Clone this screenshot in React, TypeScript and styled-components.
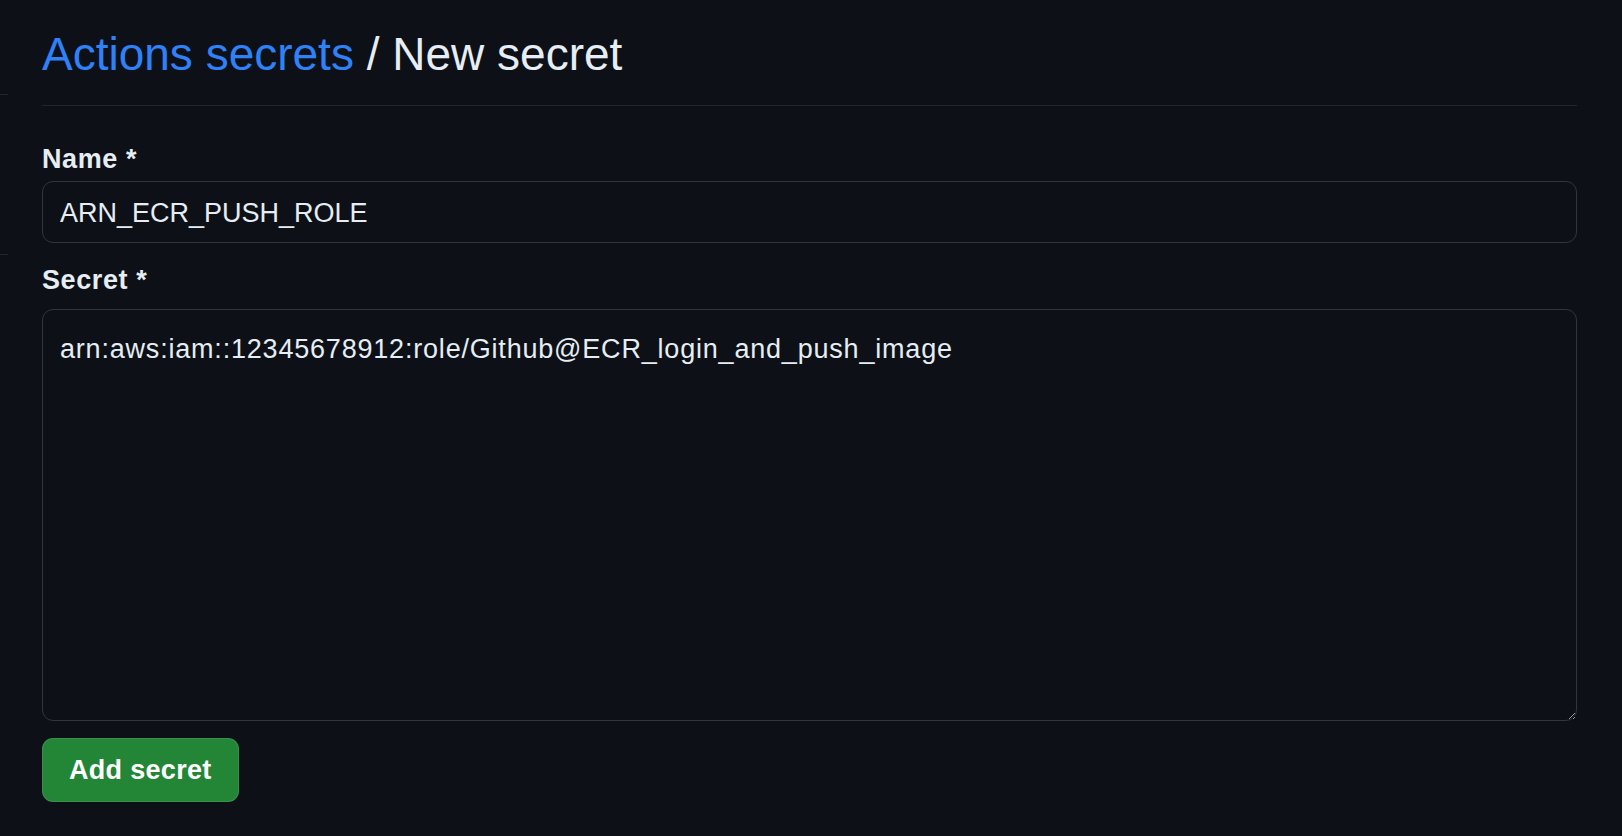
import React from "react";
import styled, { createGlobalStyle } from "styled-components";

const GlobalStyle = createGlobalStyle`
  html, body {
    margin: 0;
    padding: 0;
    background: #0d1117;
  }
  body {
    font-family: "Liberation Sans", Arial, sans-serif;
    color: #e6edf3;
  }
`;

export default function App() {
  return (
    <>
      <GlobalStyle />
      <Page>
        <Sidebar>
          <SideBlock />
        </Sidebar>
        <Main>
          <Header>
            <Crumb href="#">Actions secrets</Crumb> / New secret
          </Header>
          <Form onSubmit={(e) => e.preventDefault()}>
            <Label htmlFor="secret_name" $gap={4}>
              Name *
            </Label>
            <Input id="secret_name" type="text" defaultValue="ARN_ECR_PUSH_ROLE" />
            <Label htmlFor="secret_value" $gap={11} $top={19}>
              Secret *
            </Label>
            <TextArea
              id="secret_value"
              defaultValue="arn:aws:iam::12345678912:role/Github@ECR_login_and_push_image"
            />
            <Button type="submit">Add secret</Button>
          </Form>
        </Main>
      </Page>
    </>
  );
}

const Page = styled.div`
  display: flex;
  min-height: 836px;
  background: #0d1117;
`;

const Sidebar = styled.aside`
  width: 8px;
  flex-shrink: 0;
  padding-top: 94px;
`;

const SideBlock = styled.div`
  height: 159px;
  border-top: 1px solid #21262d;
  border-bottom: 1px solid #21262d;
`;

const Main = styled.main`
  flex: 1;
  margin-left: 34px;
  margin-right: 45px;
`;

const Header = styled.h2`
  margin: 0;
  padding: 25px 0 22px;
  font-size: 46px;
  font-weight: 400;
  line-height: 58px;
  color: #e6edf3;
  border-bottom: 1px solid #21262d;
  white-space: nowrap;
`;

const Crumb = styled.a`
  color: #2f81f7;
  text-decoration: none;
  &:hover {
    text-decoration: underline;
  }
`;

const Form = styled.form`
  display: flex;
  flex-direction: column;
  align-items: flex-start;
  padding-top: 35px;
`;

const Label = styled.label<{ $gap: number; $top?: number }>`
  display: block;
  font-size: 27px;
  font-weight: 700;
  line-height: 36px;
  letter-spacing: 0.6px;
  color: #e6edf3;
  margin-top: ${(p) => p.$top ?? 0}px;
  margin-bottom: ${(p) => p.$gap}px;
`;

const fieldBase = `
  box-sizing: border-box;
  width: 100%;
  font-family: "Liberation Sans", Arial, sans-serif;
  font-size: 27px;
  color: #e6edf3;
  background: #0d1117;
  border: 1px solid #30363d;
  border-radius: 11px;
  outline: none;
  color-scheme: dark;
  &:focus {
    border-color: #2f81f7;
    box-shadow: inset 0 0 0 1px #2f81f7;
  }
`;

const Input = styled.input`
  ${fieldBase}
  height: 62px;
  padding: 3px 17px 0;
`;

const TextArea = styled.textarea`
  ${fieldBase}
  height: 412px;
  padding: 19px 17px 17px;
  line-height: 1.5;
  letter-spacing: 0.8px;
  resize: vertical;
`;

const Button = styled.button`
  margin-top: 17px;
  height: 64px;
  padding: 0 26px;
  font-family: "Liberation Sans", Arial, sans-serif;
  font-size: 27px;
  font-weight: 700;
  letter-spacing: 0.3px;
  color: #ffffff;
  background: #238636;
  border: 1px solid rgba(240, 246, 252, 0.1);
  border-radius: 11px;
  cursor: pointer;
  &:hover {
    background: #2ea043;
  }
`;
